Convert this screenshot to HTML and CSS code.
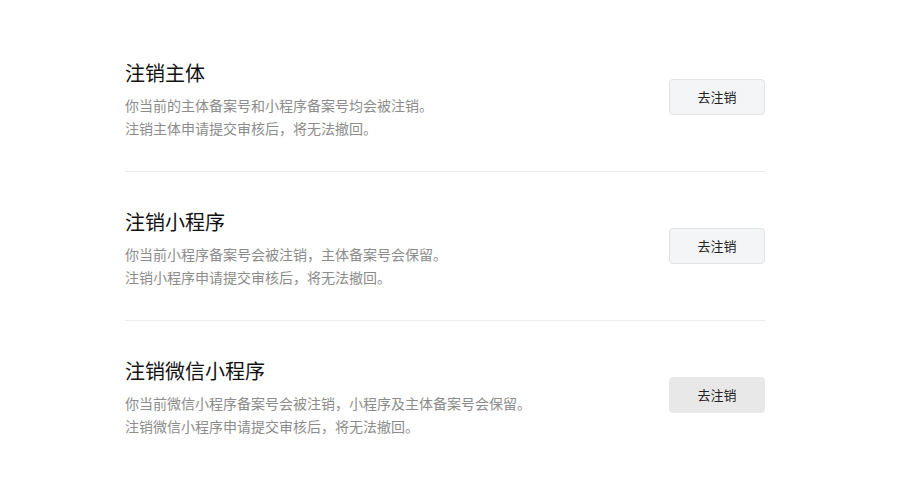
FILE: index.html
```html
<!DOCTYPE html>
<html lang="zh-CN">
<head>
  <meta charset="UTF-8">
  <meta name="viewport" content="width=device-width, initial-scale=1.0">
  <title>注销</title>
  <link rel="stylesheet" href="styles.css">
</head>
<body>
  <div class="wrap">
    <div class="item">
      <div class="info">
        <h3>注销主体</h3>
        <p>你当前的主体备案号和小程序备案号均会被注销。</p>
        <p>注销主体申请提交审核后，将无法撤回。</p>
      </div>
      <button class="btn">去注销</button>
    </div>
    <div class="item">
      <div class="info">
        <h3>注销小程序</h3>
        <p>你当前小程序备案号会被注销，主体备案号会保留。</p>
        <p>注销小程序申请提交审核后，将无法撤回。</p>
      </div>
      <button class="btn">去注销</button>
    </div>
    <div class="item">
      <div class="info">
        <h3>注销微信小程序</h3>
        <p>你当前微信小程序备案号会被注销，小程序及主体备案号会保留。</p>
        <p>注销微信小程序申请提交审核后，将无法撤回。</p>
      </div>
      <button class="btn btn-hover">去注销</button>
    </div>
  </div>
</body>
</html>
```

FILE: styles.css
```css
* {
  margin: 0;
  padding: 0;
  box-sizing: border-box;
}
body {
  background: #fff;
  font-family: "Noto Sans CJK SC", "Microsoft YaHei", sans-serif;
  padding-top: 23px;
}
.wrap {
  width: 640px;
  margin-left: 125px;
}
.item {
  display: flex;
  align-items: center;
  justify-content: space-between;
  padding: 36px 0 31px;
  border-bottom: 1px solid #ececec;
}
.item:last-child {
  border-bottom: none;
}
.info h3 {
  font-size: 20px;
  font-weight: normal;
  line-height: 28px;
  color: #111;
  margin-bottom: 7px;
}
.info p {
  font-size: 14px;
  line-height: 23px;
  color: #8c8c8c;
}
.btn {
  width: 96px;
  height: 36px;
  margin-top: -6px;
  background: #f4f5f7;
  border: 1px solid #e2e3e5;
  border-radius: 4px;
  font-family: inherit;
  font-size: 13px;
  color: #222;
  cursor: pointer;
}
.btn:hover, .btn-hover {
  background: #e8e8e8;
  border-color: #e8e8e8;
}
```
